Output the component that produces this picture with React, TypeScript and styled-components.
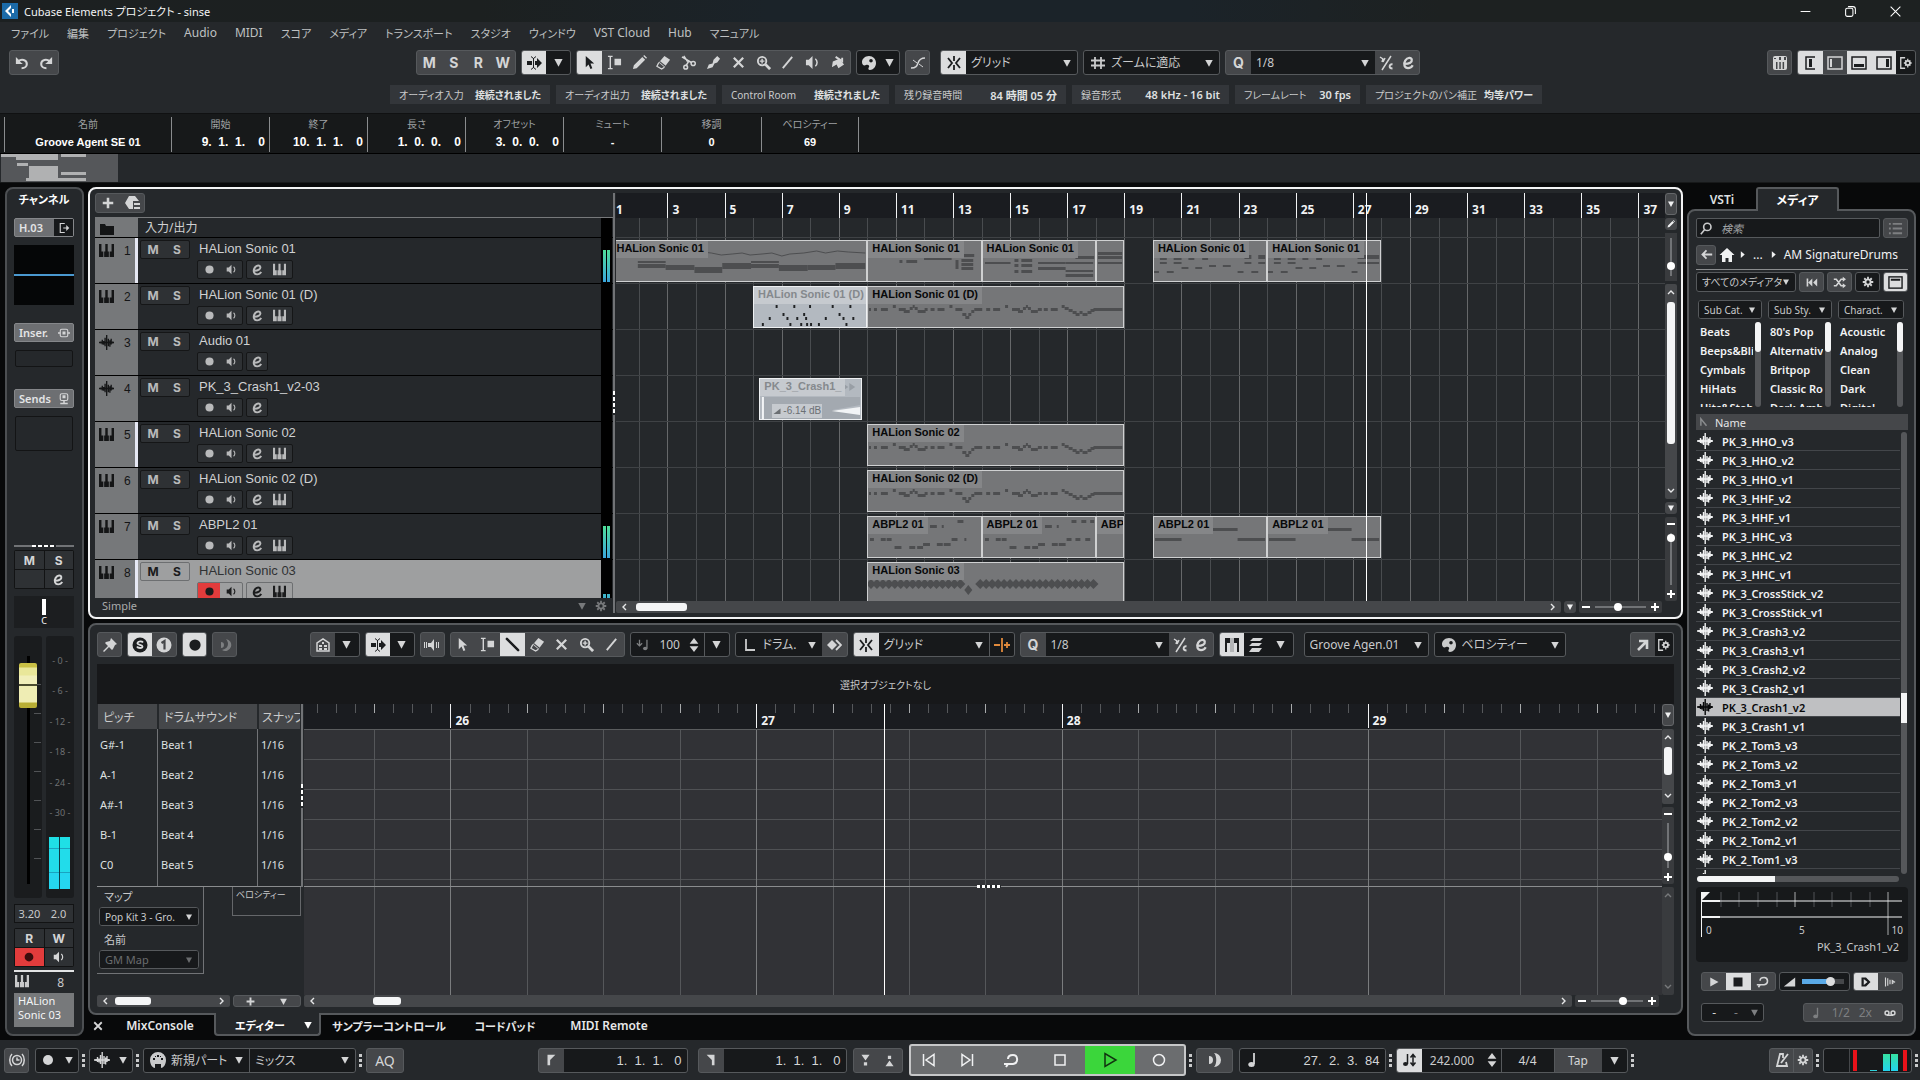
import React from "react";
import styled, { createGlobalStyle, css } from "styled-components";

/* ---------- theme values ---------- */
const c = {
  panel: "#25282b",
  dark: "#17191b",
  line: "#56595c",
  raised: "#45474a",
  key: "#2e3134",
  text: "#c9cacb",
  bright: "#f2f3f4",
  on: "#dcddde",
};

const Global = createGlobalStyle`
  * { box-sizing: border-box; }
  body { margin: 0; background: #08090a; overflow: hidden; }
  body, button, input, select, table {
    font-family: "Noto Sans", "Noto Sans CJK JP", sans-serif;
    font-size: 12px;
    font-feature-settings: "palt";
    color: ${c.text};
  }
  button { padding: 0; border: 0; background: none; }
  svg { display: block; flex: none; }
  ul { margin: 0; padding: 0; list-style: none; }
`;

/* ---------- icons ---------- */
const s = { fill: "none", stroke: "currentColor", strokeWidth: 2 } as const;
const t = { fill: "none", stroke: "currentColor", strokeWidth: 1 } as const;

const icons: Record<string, React.ReactNode> = {
  undo: <><path {...s} strokeWidth={2.4} d="M4 6C7 3 13.500 4 13.500 9c0 3-2.500 5-6 5" /><path fill="currentColor" d="M1 1v8h8L6.500 7 4 4z" /></>,
  redo: <><path {...s} strokeWidth={2.4} d="M12 6C9 3 2.500 4 2.500 9c0 3 2.500 5 6 5" /><path fill="currentColor" d="M15 1v8H7l2.500-2L12 4z" /></>,
  follow: <><path fill="currentColor" d="M1 6h5v4H1zM9 6h2V3l5 5-5 5v-3H9z" /><path {...t} d="M7.500 3v10M5 1.500l2.500 2 2.500-2M5 14.500l2.500-2 2.500 2" /></>,
  arrow: <path fill="currentColor" d="M4 1v12l3-3 2 5 2-1-2-5h4z" />,
  range: <><path {...s} strokeWidth={1.5} d="M1 1.500h5M1 14.500h5M3.500 2v12" /><path fill="currentColor" d="M8 4h7v7H8z" /></>,
  pencil: <path fill="currentColor" d="M1 15l1-4 9-9 3 3-9 9zM12 1l1-1 3 3-1 1z" />,
  eraser: <><path fill="currentColor" d="M3 8l6-7 6 4-6 8z" /><path fill="none" stroke="currentColor" strokeWidth="1.400" d="M3 8l-2 4 5 3 3-2" /><path stroke="#45474a" strokeWidth="1.200" d="M4 7l6 5" /></>,
  scissors: <><path {...s} strokeWidth={1.6} d="M1 2l10 6M5 12L8 7M3 1l4 6" /><circle {...t} strokeWidth={1.6} cx="13" cy="9" r="2.200" /><circle {...t} strokeWidth={1.6} cx="5" cy="13" r="2" /></>,
  glue: <path fill="currentColor" d="M1 15l2-5 4-1 1-4 4-4 3 3-3 4-3 1-2 4zM4 10h3v3H4z" />,
  cross: <path {...s} strokeWidth={2.4} d="M3 3l10 10M13 3L3 13" />,
  zoom: <><circle {...s} cx="6.500" cy="6.500" r="4.500" /><path {...s} strokeWidth={1.5} d="M6.500 4v5M4 6.500h5" /><path {...s} strokeWidth={3} d="M10 10l5 5" /></>,
  line: <path {...s} d="M3 14L13 2" />,
  speaker: <><path fill="currentColor" d="M1 5h3l4-4v14l-4-4H1z" /><path {...s} strokeWidth={1.6} d="M11 4c2.500 2 2.500 6 0 8" /></>,
  bucket: <><path fill="currentColor" d="M3 7l7-3 5 6-6 4-2-4-5 3z" /><path {...s} d="M6 2l6 4M13 3v5" /></>,
  palette: <path fill="currentColor" fillRule="evenodd" d="M8 1c4 0 7 3 7 7s-3 7-6 7c-2 0-2-2-1-3s-1-3-3-2-4 0-4-3c0-3 3-6 7-6zM10 4a1.800 1.800 0 100 3.600A1.800 1.800 0 0010 4z" />,
  fade: <><path {...s} strokeWidth={1.5} d="M1 13c5 0 6-2 7-5s3-5 7-5" /><path {...t} d="M3 5l4 3M9 9l4 3" /></>,
  snap: <path {...s} strokeWidth={1.8} d="M8 1v5M8 10v5M2 3l4 5-4 5M14 3l-4 5 4 5" />,
  hash: <path {...s} strokeWidth={1.8} d="M5 2v12M11 2v12M1 5.500h14M1 10.500h14" />,
  swing: <><path {...t} strokeWidth={1.5} d="M4 15L13 1M2 2l3 2-1 3M5 7l2-4" /><path {...t} strokeWidth={2} d="M14.500 9.500c-3-1-4.500 4 0 4" /></>,
  e: <path {...s} strokeWidth={2.4} d="M4 9.500c5 0 8-2 7.500-4.500S7 2 4.500 6s-.5 8 3 8c2.500 0 4-1 5-3" />,
  keyWin: <><rect x="1" y="1" width="14" height="14" rx="2" fill="currentColor" /><path fill="#45474a" d="M2 3h2v1H2zM7 2h2v3H7zM12 2h2v3h-2zM4 7h1.500v7H4zM7.300 7h1.500v7H7.300zM10.600 7h1.500v7h-1.500z" /></>,
  layL: <><path {...t} strokeWidth={1.5} d="M13 2H4v12h9" /><path fill="currentColor" d="M7 4h3v8H7z" /></>,
  layBoxL: <><rect {...t} strokeWidth={1.5} x="1" y="2" width="14" height="12" /><path fill="currentColor" d="M3 4h2v8H3z" /></>,
  layB: <><rect {...t} strokeWidth={1.5} x="1" y="2" width="14" height="12" /><path fill="currentColor" d="M3 9h10v3H3z" /></>,
  layR: <><rect {...t} strokeWidth={1.5} x="1" y="2" width="14" height="12" /><path fill="currentColor" d="M10 4h3v8h-3z" /></>,
  layT: <><rect {...t} strokeWidth={1.5} x="1" y="2" width="14" height="12" /><path fill="currentColor" d="M3 4h10v2H3z" /></>,
  setup: <><path {...t} strokeWidth={1.5} d="M7 2H2v12h5" /><circle {...s} cx="10" cy="8" r="2.500" /><path {...t} strokeWidth={1.5} d="M10 3v2M10 11v2M5.500 8h2M12.500 8h2M7 5l1 1M12 10l1 1M13 5l-1 1M8 10l-1 1" /></>,
  gear: <><circle {...s} strokeWidth={2.6} cx="8" cy="8" r="3.500" /><path {...s} strokeWidth={2.4} d="M8 1v3M8 12v3M1 8h3M12 8h3M3 3l2 2M11 11l2 2M13 3l-2 2M5 11l-2 2" /></>,
  down: <path fill="currentColor" d="M2 3h12L8 14z" />,
  plus: <path {...s} strokeWidth={3.4} d="M8 1v14M1 8h14" />,
  preset: <><path fill="currentColor" d="M5 1h6l4 5H9v8H5L1 8z" /><path {...s} strokeWidth={2.2} d="M10 9h6M10 13h6" /></>,
  folder: <path fill="currentColor" d="M1 3h5l1 2h8v9H1z" />,
  keys: <path fill="currentColor" d="M0 1h2.600v8h2v6H0zM6.700 1h2.600v8h1.200v6h-5V9h1.200zM13.400 1H16v14h-4.600V9h2z" />,
  wave: <path fill="none" stroke="currentColor" strokeWidth="1.400" d="M0 8h16M2 7v2M3.500 5v5M5 6.500v4M6.500 3v9M8.200 0v16M10 4v8M11.600 5.500v7M13 4v6M14.500 7v2" />,
  rec: <circle cx="8" cy="8" r="5" fill="currentColor" />,
  out: <><path {...s} strokeWidth={1.5} d="M9 2H3v12h6M7 8h5" /><path fill="currentColor" d="M11 4l4 4-4 4z" /></>,
  insert: <><rect {...s} strokeWidth={1.5} x="3" y="3" width="10" height="10" rx="2" /><path fill="currentColor" d="M6 6h4v4H6zM0 7h3v2H0zM13 7h3v2h-3z" /></>,
  send: <><rect {...s} strokeWidth={1.5} x="3" y="1" width="10" height="9" rx="2" /><path fill="currentColor" d="M6 3h4v4H6zM7 10h2v3H7zM3 13h10v2H3z" /></>,
  pin: <path fill="currentColor" d="M9 1l6 6-2 1-2 4-1 1-3-3-5 5-1-1 5-5-3-3 1-1 4-1z" />,
  solo: <><circle cx="8" cy="8" r="7.500" fill="currentColor" /><path fill="none" stroke="#dcddde" strokeWidth="1.800" d="M11 5.500c-1-1.500-5-1.500-5.500.5s5 1.500 5 3.500-4.500 2-5.500 0" /></>,
  one: <><circle cx="8" cy="8" r="7.500" fill="currentColor" /><path fill="none" stroke="#45474a" strokeWidth="2.200" d="M5.500 6L8.500 4v8.500" /></>,
  loopRec: <path fill="currentColor" fillRule="evenodd" d="M9 2a6 6 0 11-4 11c4-1 6-3 6-6 0-2-1-4-2-5zM4 5a2.500 2.500 0 110 6z" />,
  home: <><path {...s} strokeWidth={1.5} d="M2 14V6l6-4 6 4v8z" /><path fill="currentColor" d="M7 5h2v2H7zM4 8h3v2H4zM9 8h3v2H9zM4 11h3v2H4zM9 11h3v2H9z" /></>,
  feedback: <><path fill="currentColor" d="M4 6h3l3-4v12l-3-4H4z" /><path {...t} d="M.5 5v6M2.500 5v6M12.500 5v6M14.500 5v6" /></>,
  stick: <path {...s} strokeWidth={2.6} d="M2 2l4 4 8 8" strokeLinecap="round" />,
  velIn: <><path {...s} strokeWidth={1.5} d="M4 2v6M1 6l3 3 3-3" /><path {...s} strokeWidth={1.5} d="M12.500 2v10" /><ellipse cx="10.500" cy="12" rx="2.500" ry="2" fill="currentColor" /></>,
  spin: <path fill="currentColor" d="M8 0l5 6.500H3zM8 16l5-6.500H3z" />,
  len: <path {...s} strokeWidth={1.8} d="M4 2v11h9" />,
  diamond: <><path fill="currentColor" d="M6 3l5 5-5 5-5-5z" /><path {...s} strokeWidth={1.8} d="M10 3l5 5-5 5" /></>,
  nudge: <path {...s} strokeWidth={1.8} d="M0 8h6M8 1v14M10 8h6M13 5v6" />,
  pads: <><path fill="currentColor" d="M1 1h5v5H3v9H1zM15 1h-5v5h3v9h2z" /><path {...t} strokeWidth={1.2} d="M7 1v14M9 1v14" opacity=".35" /></>,
  layers: <path fill="currentColor" d="M5 1h10l-3 3H2zM4 6h10l-3 3H1zM4 11h10l-3 4H1z" />,
  popout: <path {...s} strokeWidth={2.6} d="M4 4h8v8M12 4L3 13" />,
  search: <><circle {...s} cx="9" cy="6" r="4.500" /><path {...s} d="M6 9l-5 6" /></>,
  list: <path {...s} d="M1 3h2M5 3h10M1 8h2M5 8h10M1 13h2M5 13h10" />,
  back: <path {...s} strokeWidth={2.2} d="M15 8H3M8 3L3 8l5 5" />,
  house: <path fill="currentColor" d="M8 1l7.500 7H13v7H9.500v-4h-3v4H3V8H.5z" />,
  right: <path fill="currentColor" d="M5 2l7 6-7 6z" />,
  rewind: <path fill="currentColor" d="M2 3h2v10H2zM9 3v10L4 8zM15 3v10l-5-5z" />,
  shuffle: <><path {...s} d="M1 4h3l6 8h3M1 12h3l6-8h3" /><path fill="currentColor" d="M12 1l4 3-4 3zM12 9l4 3-4 3z" /></>,
  play: <path fill="currentColor" d="M3 2l11 6-11 6z" />,
  stop: <path fill="currentColor" d="M2 2h12v12H2z" />,
  cycle: <path {...s} d="M1 12h4l-2 3M5 12h5c6-1 5-9 0-9-3 0-5 1-5 4" />,
  vol: <path fill="currentColor" d="M1 14L15 3v11z" />,
  auto: <path fill="currentColor" fillRule="evenodd" d="M2 2h6l6 6-6 6H2zM5 4v8l5-4z" />,
  beats: <path {...s} strokeWidth={1.5} d="M2 2v12M5 3v10M8 5v6M11 6l3 2-3 2z" />,
  note: <><path {...s} strokeWidth={1.8} d="M10 1v11" /><ellipse cx="7.500" cy="12.500" rx="3.200" ry="2.500" fill="currentColor" /></>,
  tape: <><circle {...s} cx="4" cy="8" r="2.600" /><circle {...s} cx="12" cy="8" r="2.600" /><path {...s} d="M4 11h8" /></>,
  clock: <><circle {...s} strokeWidth={1.5} cx="8" cy="8" r="4.500" /><path {...t} strokeWidth={1.5} d="M8 5.500V8h2.500M3 2C0 5 0 11 3 14M13 2c3 3 3 9 0 12" /></>,
  palPart: <><path fill="currentColor" d="M8 0a8 8 0 018 8c0 5-3 8-5 8v-4H5v4C3 16 0 13 0 8a8 8 0 018-8z" /><path fill="#17191b" d="M3 6h2v2H3zM7 3h2v2H7zM11 6h2v2h-2zM5 4h1v1H5zM10 4h1v1h-1z" /></>,
  locL: <path fill="currentColor" d="M4 2h9L7 8v6H4z" />,
  locR: <path fill="currentColor" d="M3 2h9v12H9V8z" />,
  punchIn: <path fill="currentColor" d="M3 1h10L8 8zM6 10h4v4H6z" />,
  punchOut: <path fill="currentColor" d="M3 15h10L8 8zM6 2h4v4H6z" />,
  toStart: <path {...s} strokeWidth={1.5} d="M2.500 2v12M13 2.500v11L5 8z" />,
  toEnd: <path {...s} strokeWidth={1.5} d="M13.500 2v12M3 2.500v11L11 8z" />,
  stopO: <rect {...s} strokeWidth={1.5} x="3" y="3" width="10" height="10" />,
  playO: <path {...s} strokeWidth={1.5} d="M3 1.500v13L14 8z" />,
  recO: <circle {...s} strokeWidth={1.5} cx="8" cy="8" r="5.500" />,
  preroll: <path fill="currentColor" d="M8 1a7 7 0 010 14c3-3 3-11 0-14zM3 4a4 4 0 110 8z" />,
  tempo: <><path {...s} strokeWidth={1.5} d="M6.500 2v10M12 3v10M9.500 5.500L12 2.500l2.500 3M9.500 10.500l2.500 3 2.500-3" /><ellipse cx="4.500" cy="12" rx="2.500" ry="2" fill="currentColor" /></>,
  metro: <path {...s} strokeWidth={1.8} d="M9 6V2H6L3 14h10l-1-4M7 11l7-9" />,
  sort: <path {...s} strokeWidth={2.4} stroke="#8a8c8e" d="M3 14V3l9 11" />,
  min: <path {...t} strokeWidth={1.2} d="M2 8h12" />,
  restore: <><rect {...t} strokeWidth={1.3} x="2" y="4" width="9" height="10" rx="2" /><path {...t} strokeWidth={1.3} d="M5 2h6c2 0 3 1 3 3v6" /></>,
  close: <path {...t} strokeWidth={1.3} d="M2 2l12 12M14 2L2 14" />,
};

const Icon = ({ n, z = 16 }: { n: string; z?: number }) => (
  <svg width={z} height={z} viewBox="0 0 16 16" aria-hidden="true">{icons[n]}</svg>
);

/* ---------- shared controls ---------- */
const Group = styled.div<{ $w?: number; $dark?: boolean; $h?: number }>`
  display: flex;
  flex: none;
  width: ${(p) => (p.$w ? p.$w + "px" : "auto")};
  height: ${(p) => p.$h ?? 25}px;
  border: 1px solid ${c.line};
  border-radius: 3px;
  overflow: hidden;
  background: ${(p) => (p.$dark ? c.dark : c.raised)};
`;

type BtnProps = { $on?: boolean; $dark?: boolean; $w?: number; $dim?: boolean; $fg?: string; $bg?: string };
const Btn = styled.button<BtnProps>`
  display: flex;
  flex: 0 1 auto;
  width: ${(p) => p.$w ?? 25}px;
  min-width: 0;
  align-items: center;
  justify-content: center;
  color: ${(p) => p.$fg ?? (p.$on ? "#1b1d1f" : p.$dim ? "#7d7f81" : "#d4d5d6")};
  background: ${(p) => p.$bg ?? (p.$on ? c.on : p.$dark ? c.dark : "transparent")};
`;

const Letter = styled(Btn)<{ $small?: boolean }>`
  font: bold ${(p) => (p.$small ? 12 : 14)}px Inter, "Liberation Sans", sans-serif;
`;
const TextBtn = styled(Btn)`
  font-size: 14px;
`;
const Lit = styled(Btn)`
  border-left: 1px solid ${c.line};
`;

const SelectWrap = styled.span`
  position: relative;
  display: flex;
  flex: 1 1 0;
  min-width: 0;
  align-items: center;
  background: ${c.dark};
  > svg { margin-left: 6px; }
  & + & { border-left: 1px solid ${c.line}; }
`;
const NativeSelect = styled.select<{ $size: number }>`
  appearance: none;
  flex: 1 1 0;
  min-width: 0;
  height: 100%;
  padding: 0 13px 0 5px;
  border: 0;
  background: transparent;
  font-size: ${(p) => p.$size}px;
  &:disabled { color: #6a6c6e; opacity: 1; }
`;
const CaretMark = styled.span<{ $dim?: boolean }>`
  position: absolute;
  right: 5px;
  top: 50%;
  translate: 0 -50%;
  pointer-events: none;
  color: ${(p) => (p.$dim ? "#6a6c6e" : "#d4d5d6")};
`;

const Select = ({ label, value, icon, size = 12, disabled }: { label: string; value: string; icon?: string; size?: number; disabled?: boolean }) => (
  <SelectWrap>
    {icon && <Icon n={icon} />}
    <NativeSelect aria-label={label} defaultValue={value} $size={size} disabled={disabled}>
      <option>{value}</option>
    </NativeSelect>
    <CaretMark $dim={disabled}><Icon n="down" z={size < 12 ? 8 : 10} /></CaretMark>
  </SelectWrap>
);

const IconBtn = ({ n, z, ...p }: { n: string; z?: number } & BtnProps) => (
  <Btn type="button" aria-label={n} {...p}><Icon n={n} z={z} /></Btn>
);

const Bar = styled.div<{ $gap?: number; $ml?: number; $mt?: number }>`
  display: flex;
  align-items: center;
  gap: ${(p) => p.$gap ?? 5}px;
  margin-left: ${(p) => p.$ml ?? 0}px;
  margin-top: ${(p) => p.$mt ?? 0}px;
`;

const Dots = styled.i`
  width: 3px;
  height: 13px;
  margin: 0 -2px 0 -3px;
  background: repeating-linear-gradient(#c9cacb 0 3px, transparent 3px 5px);
`;

/* scroll bars */
const ScrollBox = styled.div<{ $v?: boolean; $len?: number; $dim?: boolean }>`
  display: flex;
  flex-direction: ${(p) => (p.$v ? "column" : "row")};
  flex: ${(p) => (p.$len ? `0 0 ${p.$len}px` : "1 1 0")};
  align-items: center;
  min-width: 0;
  min-height: 0;
  background: ${(p) => (p.$dim ? "#393b3e" : c.raised)};
  border-radius: 2px;
  button { color: ${(p) => (p.$dim ? "#77797b" : "#e6e7e8")}; }
`;
const ScrollTrack = styled.div<{ $v?: boolean }>`
  display: flex;
  flex: 1 1 0;
  flex-direction: ${(p) => (p.$v ? "column" : "row")};
`;
const Thumb = styled.i<{ $v?: boolean; $at: number; $len: number }>`
  border-radius: 3px;
  background: #f4f5f6;
  ${(p) => p.$v
    ? css`width: 8px; height: ${p.$len}px; margin-top: ${p.$at}px;`
    : css`height: 8px; width: ${p.$len}px; margin-left: ${p.$at}px;`}
`;
const ArrowBtn = styled.button<{ $turn: number }>`
  width: 12px;
  height: 12px;
  margin: ${(p) => (p.$turn % 180 ? "0 2px" : "2px 0")};
  display: grid;
  place-items: center;
  rotate: ${(p) => p.$turn}deg;
`;
const Chevron = () => (
  <svg width="8" height="8" viewBox="0 0 8 8"><path d="M1 6l3-3 3 3" fill="none" stroke="currentColor" strokeWidth="1.400" /></svg>
);
const Scroll = ({ v, len, at, size }: { v?: boolean; len?: number; at: number; size: number }) => (
  <ScrollBox $v={v} $len={len} $dim={size === 0}>
    <ArrowBtn type="button" aria-label="scroll back" $turn={v ? 0 : -90}><Chevron /></ArrowBtn>
    <ScrollTrack $v={v}>{size > 0 && <Thumb $v={v} $at={at} $len={size} />}</ScrollTrack>
    <ArrowBtn type="button" aria-label="scroll forward" $turn={v ? 180 : 90}><Chevron /></ArrowBtn>
  </ScrollBox>
);

const Range = styled.input<{ $v?: boolean }>`
  appearance: none;
  flex: 1 1 0;
  min-width: 0;
  min-height: 0;
  margin: 0;
  ${(p) => p.$v
    ? css`writing-mode: vertical-lr; width: 12px; background: linear-gradient(#717376, #717376) center / 2px 100% no-repeat;`
    : css`height: 12px; background: linear-gradient(#717376, #717376) center / 100% 2px no-repeat;`}
  &::-webkit-slider-thumb {
    appearance: none;
    width: 8px;
    height: 8px;
    border-radius: 50%;
    background: #fff;
  }
`;
const ZoomBox = styled.div<{ $v?: boolean; $len: number }>`
  display: flex;
  flex: 0 0 ${(p) => p.$len}px;
  flex-direction: ${(p) => (p.$v ? "column" : "row")};
  align-items: center;
  min-width: 0;
  min-height: 0;
  gap: 4px;
  padding: ${(p) => (p.$v ? "2px 0" : "0 2px")};
  background: #393b3e;
  border-radius: 2px;
  button { color: #fff; }
`;
const Sign = ({ plus }: { plus?: boolean }) => (
  <button type="button" aria-label={plus ? "zoom in" : "zoom out"}>
    <svg width="10" height="10" viewBox="0 0 10 10"><path d={plus ? "M5 1v8M1 5h8" : "M1 5h8"} stroke="currentColor" strokeWidth="2" /></svg>
  </button>
);
const Zoom = ({ v, len, value }: { v?: boolean; len: number; value: number }) => (
  <ZoomBox $v={v} $len={len}>
    <Sign />
    <Range type="range" aria-label="zoom" $v={v} defaultValue={value} />
    <Sign plus />
  </ZoomBox>
);
const TinyBtn = styled.button<{ $h?: number; $edge?: boolean }>`
  display: grid;
  place-items: center;
  flex: none;
  width: 12px;
  height: ${(p) => p.$h ?? 12}px;
  border: ${(p) => (p.$edge ? "1px solid #65676a" : "0")};
  border-radius: 3px;
  background: ${c.raised};
  color: #f0f1f2;
`;

/* ---------- frame ---------- */
const Shell = styled.div`
  display: flex;
  flex-direction: column;
  height: 100vh;
  background: #08090a;
`;
const Top = styled.header`
  flex: none;
  background: ${c.panel};
`;
const TitleBar = styled.div`
  display: flex;
  align-items: center;
  gap: 6px;
  height: 22px;
  padding: 0 18px 0 2px;
  background: linear-gradient(90deg, #1c2021, #1c2020 25%, #1b2329 40%, #1b2329 62%, #1d2121 75%);
  font-size: 11px;
  color: ${c.bright};
`;
const WinBtns = styled.div`
  display: flex;
  gap: 32px;
  margin-left: auto;
  button { color: #fff; }
`;
const Menu = styled.nav`
  display: flex;
  gap: 18px;
  height: 21px;
  padding: 0 11px;
  align-items: center;
`;
const MenuItem = styled.a<{ $jp: boolean }>`
  color: #bfc0c1;
  text-decoration: none;
  white-space: nowrap;
  font-size: ${(p) => (p.$jp ? 11 : 12)}px;
`;
const ToolRow = styled.div`
  display: flex;
  justify-content: space-between;
  height: 38px;
  padding: 1px 4px 0 9px;
  align-items: center;
`;
const Status = styled.div`
  display: flex;
  justify-content: center;
  gap: 6px;
  height: 32px;
  padding: 4px 0 9px 12px;
`;
const Chip = styled.div<{ $w: number; $jp: boolean }>`
  display: flex;
  justify-content: space-between;
  align-items: center;
  min-width: ${(p) => p.$w}px;
  padding: 0 9px;
  background: #33363a;
  font-size: 10px;
  white-space: nowrap;
  b { font-weight: 600; font-size: ${(p) => (p.$jp ? 10 : 11)}px; color: #dfe0e1; }
`;
const InfoLine = styled.dl`
  display: flex;
  height: 41px;
  margin: 0;
  padding: 3px 0 1px 4px;
  background: #17191a;
  border-bottom: 1px solid #000;
  border-top: 1px solid #101112;
`;
const Field = styled.div<{ $w: number; $right?: boolean }>`
  width: ${(p) => p.$w}px;
  border-left: 1px solid #8a8c8e;
  text-align: center;
  &:last-child { border-right: 1px solid #8a8c8e; }
  dt { font-size: 10px; line-height: 14px; color: #9fa1a3; }
  dd {
    margin: 3px 0 0;
    padding-right: ${(p) => (p.$right ? 4 : 0)}px;
    text-align: ${(p) => (p.$right ? "right" : "center")};
    font: bold ${(p) => (p.$right ? 12 : 11)}px/17px "Liberation Sans", sans-serif;
    color: #fff;
    white-space: pre;
  }
`;
const Overview = styled.div`
  height: 29px;
  border-bottom: 1px solid #17191a;
  background: ${c.panel};
`;

const Main = styled.main`
  display: flex;
  flex: 1 1 0;
  min-height: 0;
  gap: 4px;
  padding: 4px 4px 4px 5px;
`;
const Center = styled.div`
  display: flex;
  flex-direction: column;
  flex: 1 1 0;
  min-width: 0;
`;

/* ---------- channel strip ---------- */
const Strip = styled.aside`
  display: flex;
  flex-direction: column;
  align-items: stretch;
  flex: 0 0 79px;
  padding: 3px 8px 7px 7px;
  border: 2px solid #4c4f52;
  border-radius: 8px;
  background: ${c.panel};
`;
const StripTitle = styled.h2`
  margin: 0 0 10px;
  font-size: 11px;
  line-height: 16px;
  font-weight: 600;
  text-align: center;
  color: #fff;
`;
const StripHead = styled.div<{ $mt?: number }>`
  display: flex;
  flex: none;
  height: 19px;
  margin-top: ${(p) => p.$mt ?? 0}px;
  border: 1px solid #85878a;
  border-radius: 2px;
  background: #6d6f72;
  font-size: 11px;
  font-weight: 600;
  color: #e4e5e6;
  span { flex: 1; line-height: 17px; padding-left: 4px; }
`;
const Eq = styled.div`
  flex: none;
  height: 60px;
  margin-top: 8px;
  background: linear-gradient(#4a98cf, #4a98cf) center / 100% 2px no-repeat #050607;
`;
const Slot = styled.div<{ $h: number }>`
  flex: none;
  height: ${(p) => p.$h}px;
  margin: 8px 1px 0;
  border: 1px solid #131415;
  border-radius: 2px;
`;
const Grip = styled.div`
  height: 2px;
  margin: auto 0 3px;
  background: repeating-linear-gradient(90deg, #fff 0 4px, ${c.panel} 4px 6px) center / 24px 2px no-repeat, #717376;
`;
const Quad = styled.div`
  display: grid;
  flex: none;
  grid-template-columns: 1fr 1fr;
  grid-auto-rows: 18px;
  gap: 1px;
  padding: 1px;
  background: #121314;
  border-radius: 2px;
  > button { width: auto; }
`;
const Pan = styled.div`
  flex: none;
  height: 32px;
  margin: 7px 0 8px;
  padding-top: 3px;
  background: #1c1e20;
  text-align: center;
  font-size: 9px;
  line-height: 11px;
  color: #fff;
  &::before { content: ""; display: block; width: 4px; height: 16px; margin: 0 auto; background: #fff; }
`;
const Levels = styled.div`
  display: flex;
  flex: none;
  height: 262px;
  gap: 4px;
`;
const Well = styled.div`
  position: relative;
  display: flex;
  flex: 1;
  min-width: 0;
  border-radius: 3px;
  background: #1a1c1e;
  padding: 20px 0 14px;
`;
const Fader = styled.input`
  appearance: none;
  writing-mode: vertical-lr;
  width: 28px;
  height: 100%;
  margin: 0;
  background: linear-gradient(#000, #000) center / 3px 100% no-repeat,
    repeating-linear-gradient(transparent 0 28px, #515356 28px 29px) 20px 0 / 7px 100% no-repeat;
  &::-webkit-slider-thumb {
    appearance: none;
    width: 18px;
    height: 45px;
    border-radius: 2px;
    background: linear-gradient(#c9c045 0 4px, #e9e79a 5px 12px, #f1efbb 13px 21px, #4b4c30 21px 23px, #efedb4 23px 39px, #b8ae35 40px);
  }
`;
const Scale = styled.ol`
  display: flex;
  flex-direction: column;
  width: 100%;
  height: 162px;
  margin: 0;
  padding: 0;
  justify-content: space-between;
  list-style: none;
  text-align: center;
  white-space: nowrap;
  font-size: 9px;
  line-height: 10px;
  color: #6f7173;
`;
const Meters = styled.div`
  position: absolute;
  inset: auto 4px 9px 3px;
  display: flex;
  gap: 1px;
  height: 52px;
  background: #0d3a44;
  i { flex: 1; background: repeating-linear-gradient(0deg, #25d6f0 0 16px, #1aa3c0 16px 17px, #22dcea 17px 40px, #1aa3c0 40px 41px, #1fdfe6 41px 52px); }
`;
const Readout = styled.div`
  display: grid;
  flex: none;
  grid-template-columns: 1fr 1fr;
  height: 19px;
  margin: 6px 0 5px;
  border: 1px solid #121314;
  background: ${c.key};
  font-size: 11px;
  line-height: 17px;
  text-align: center;
`;
const Num = styled.div`
  display: flex;
  justify-content: space-between;
  flex: none;
  height: 21px;
  margin-top: 3px;
  padding: 2px 10px 0 1px;
  border-top: 2px solid #e2e3e4;
  line-height: 17px;
`;
const NameBox = styled.div`
  flex: none;
  height: 34px;
  margin-top: 2px;
  padding: 1px 4px;
  background: #77797b;
  color: #f4f5f6;
  font-size: 11px;
  line-height: 14px;
`;

/* ---------- project zone ---------- */
const Project = styled.section`
  display: flex;
  flex: none;
  height: 40vh;
  margin-bottom: 4px;
  padding: 4px 4px 4px 5px;
  border: 2px solid #f2f3f4;
  border-radius: 8px;
  background: ${c.panel};
  overflow: hidden;
`;
const Tracks = styled.div`
  display: flex;
  flex: 0 0 518px;
  flex-direction: column;
`;
const TrackHead = styled.div`
  flex: none;
  height: 25px;
  border-bottom: 1px solid #77797b;
`;
const TrackList = styled.ul`
  flex: 1 1 0;
  min-height: 0;
  overflow: hidden;
`;
const Row = styled.li<{ $h?: number; $sel?: boolean }>`
  display: flex;
  height: ${(p) => p.$h ?? 46}px;
  border-bottom: 1px solid #000;
  background: ${(p) => (p.$sel ? "#9e9fa0" : "#25282b")};
  color: ${(p) => (p.$sel ? "#303234" : "#d0d1d2")};
`;
const RowTag = styled.div<{ $bar?: boolean; $pt?: number }>`
  display: flex;
  flex: 0 0 43px;
  gap: 10px;
  padding: ${(p) => p.$pt ?? 5}px 0 0 4px;
  border-right: 3px solid ${(p) => (p.$bar ? "#e6e8f4" : "transparent")};
  background: linear-gradient(90deg, #76787a 40px, transparent 40px);
  color: #141516;
  font: 12px/16px "Liberation Sans", sans-serif;
`;
const RowBody = styled.div`
  flex: 1;
  display: grid;
  grid-template-columns: 57px 1fr;
  grid-template-rows: 22px 19px;
  padding-left: 2px;
`;
const MiniGroup = styled.div<{ $sel?: boolean; $mt?: number }>`
  display: flex;
  width: max-content;
  height: 19px;
  margin-top: ${(p) => p.$mt ?? 0}px;
  border: 1px solid ${(p) => (p.$sel ? "#6d6f71" : "#151617")};
  border-radius: 2px;
  background: ${(p) => (p.$sel ? "transparent" : c.key)};
  button { color: ${(p) => (p.$sel ? "#1b1c1d" : "#b9babb")}; }
`;
const RowName = styled.span`
  padding-left: 2px;
  font: 13px/22px "Liberation Sans", sans-serif;
`;
const FolderName = styled.span`
  flex: 1;
  padding-left: 7px;
  line-height: 19px;
`;
const RowMeter = styled.div<{ $lvl?: number }>`
  display: flex;
  align-items: flex-end;
  flex: 0 0 12px;
  gap: 1px;
  padding: 0 2px 1px;
  border-right: 1px solid ${c.panel};
  background: #000;
  i { flex: 1; height: ${(p) => p.$lvl ?? 0}px; background: linear-gradient(#4fdf9a, #3aa6dc) bottom / 100% 32px; }
`;
const TrackFoot = styled.div`
  display: flex;
  align-items: center;
  flex: none;
  gap: 8px;
  height: 15px;
  padding: 0 6px 0 7px;
  font-size: 11px;
  color: #a9abac;
  svg:first-of-type { margin-left: auto; }
  svg { color: #77797b; }
`;
const Split = styled.div<{ $h?: number }>`
  position: relative;
  flex: 0 0 2px;
  height: ${(p) => (p.$h ? p.$h + "px" : "auto")};
  margin-right: 1px;
  background: #717376;
  &::after {
    content: "";
    position: absolute;
    inset: calc(50% - 12px) 0;
    background: repeating-linear-gradient(#fff 0 4px, #25282b 4px 6px);
  }
`;
const Time = styled.div`
  display: flex;
  flex: 1 1 0;
  min-width: 0;
  flex-direction: column;
`;
const TimeTop = styled.div`
  display: flex;
  flex: 1 1 0;
  min-height: 0;
`;
const Stage = styled.div`
  position: relative;
  display: flex;
  flex: 1 1 0;
  min-width: 0;
  flex-direction: column;
  overflow: hidden;
`;
const Ruler = styled.div`
  position: relative;
  flex: 0 0 25px;
  background: #1a1c20;
`;
const Tick = styled.span<{ $h?: number; $c?: string }>`
  position: absolute;
  top: 0;
  height: ${(p) => p.$h ?? 25}px;
  padding: 8px 0 0 4px;
  border-left: 1px solid ${(p) => p.$c ?? "#f2f3f4"};
  font: bold 12px/17px "Noto Sans", sans-serif;
  color: #f2f3f4;
`;
const FirstBar = styled.span`
  display: block;
  padding-top: 8px;
  font: bold 12px/17px "Noto Sans", sans-serif;
  color: #f2f3f4;
`;
const Canvas = styled.div<{ $bg?: string }>`
  position: relative;
  flex: 1 1 0;
  min-height: 0;
  overflow: hidden;
  background: ${(p) => p.$bg ?? "#25282b"};
`;
const VLine = styled.i<{ $c: string }>`
  position: absolute;
  top: 0;
  bottom: 0;
  width: 1px;
  background: ${(p) => p.$c};
`;
const Playhead = styled.i`
  position: absolute;
  top: 0;
  bottom: 0;
  width: 1px;
  background: #fff;
`;
const Lane = styled.div<{ $h?: number }>`
  position: relative;
  height: ${(p) => p.$h ?? 46}px;
  border-bottom: 1px solid #3f4245;
`;
const Event = styled.div<{ $sel?: boolean }>`
  position: absolute;
  top: 2px;
  height: 42px;
  border: 1px solid ${(p) => (p.$sel ? "#eef0f2" : "#cfd0d1")};
  background: ${(p) => (p.$sel ? "#b3b9c0" : "#757678")};
  overflow: hidden;
  color: ${(p) => (p.$sel ? "#202224" : "#4d4e50")};
  > svg { position: absolute; inset: 0; }
`;
const EvLabel = styled.span<{ $sel?: boolean }>`
  position: relative;
  display: block;
  width: max-content;
  padding: 0 4px 2px;
  font: bold 11px/15px "Liberation Sans", sans-serif;
  white-space: nowrap;
  background: ${(p) => (p.$sel ? "#c6cacf" : "#858688")};
  color: ${(p) => (p.$sel ? "#85898d" : "#08090a")};
`;
const GainTag = styled.span`
  position: absolute;
  left: 12px;
  top: 25px;
  display: flex;
  align-items: center;
  gap: 2px;
  padding: 0 1px;
  background: #c6cacf;
  color: #6b6f73;
  font: 10px/14px "Liberation Sans", sans-serif;
`;
const SideCol = styled.div`
  display: flex;
  flex: 0 0 12px;
  min-width: 0;
  flex-direction: column;
  gap: 3px;
`;
const ScrollRow = styled.div`
  display: flex;
  flex: 0 0 12px;
  gap: 3px;
`;
const SmallSlider = styled.div`
  display: flex;
  flex: 0 0 48px;
  min-height: 0;
  flex-direction: column;
  padding: 5px 0;
  background: #393b3e;
`;

type Note = [number, number, number, number?];
const Notes = ({ w, notes, children }: { w: number; notes: Note[]; children?: React.ReactNode }) => (
  <svg width="100%" height="40" viewBox={`0 0 ${w} 40`} preserveAspectRatio="none" fill="currentColor">
    {notes.map(([x, y, nw, nh = 3], i) => <rect key={i} x={x} y={y - 1} width={nw} height={nh} />)}
    {children}
  </svg>
);

const nA: Note[] = [[26, 21, 28, 2], [26, 24, 28, 4], [54, 25, 29, 5], [83, 27, 28, 6], [111, 23, 29, 6], [140, 21, 28, 2], [140, 24, 28, 4], [168, 25, 29, 6], [197, 25, 28, 5], [225, 23, 30, 6]];
const nB: Note[] = [[32, 20, 3], [39, 20, 11], [57, 18, 28, 2], [89, 20, 3, 9], [95, 14, 13], [95, 19, 12], [95, 23, 12], [95, 27, 12]];
const nC: Note[] = [[2, 22, 26, 2], [32, 19, 4], [32, 24, 4], [32, 30, 4], [39, 19, 11], [39, 24, 11], [39, 30, 11], [56, 22, 28, 2], [56, 27, 28], [94, 16, 19], [84, 22, 28, 2], [84, 30, 28, 2], [84, 34, 28]];
const nD: Note[] = [[1, 12, 26], [1, 16, 26], [1, 22, 26, 2]];
const nDrum: Note[] = [[22, 19, 2], [40, 19, 2], [56, 19, 2], [79, 19, 2], [97, 19, 2], [29, 27, 2], [50, 27, 2], [86, 27, 2], [15, 31, 2], [33, 31, 2], [43, 31, 2], [52, 31, 2], [72, 31, 2], [90, 31, 2], [100, 31, 2], [8, 37, 2], [36, 37, 2], [47, 37, 2], [53, 37, 2], [57, 37, 2], [65, 37, 2], [93, 37, 2]];
const nMel: Note[] = [[1, 22, 2], [6, 22, 3], [13, 22, 7], [25, 19, 3], [31, 22, 7], [36, 24, 6], [42, 21, 3], [45, 19, 2], [47, 21, 3], [50, 24, 8], [57, 22, 3], [63, 22, 4], [70, 22, 7], [82, 19, 3], [88, 22, 7], [95, 27, 4], [98, 30, 4], [101, 27, 3], [104, 24, 3], [107, 22, 8], [119, 22, 4], [126, 22, 7], [138, 19, 3], [145, 22, 8], [151, 24, 5], [156, 21, 3], [159, 19, 2], [161, 21, 3], [164, 24, 7], [171, 22, 4], [177, 22, 4], [184, 22, 7], [195, 19, 3], [198, 21, 4], [202, 23, 4], [206, 25, 4], [209, 27, 4], [213, 25, 3], [216, 27, 5], [221, 25, 4], [224, 23, 4], [227, 22, 29]];
const nBass: Note[] = [[2, 22, 4], [13, 22, 5], [19, 22, 5], [63, 9, 7], [75, 9, 2], [27, 30, 7], [42, 30, 6], [50, 30, 6], [56, 27, 7], [70, 27, 6], [77, 27, 7]];
const nBass1: Note[] = [...nBass, [91, 4, 6], [85, 22, 6], [98, 22, 2]];
const nBass2: Note[] = [...nBass, [90, 4, 5], [100, 4, 5], [109, 4, 4], [85, 22, 5], [94, 22, 5], [104, 22, 5]];
const nE: Note[] = [[0, 31, 5, 2], [13, 31, 7, 2], [6, 22, 7, 2], [20, 22, 8, 2], [6, 18, 7, 2], [20, 18, 8, 2], [35, 18, 6, 2], [49, 18, 6, 2], [28, 27, 7, 2], [42, 27, 7, 2], [56, 25, 7, 2], [70, 25, 8, 2], [85, 31, 6, 2]];
const nE1: Note[] = [...nE, [99, 31, 7, 2], [92, 22, 7, 2], [92, 15, 7, 4], [106, 22, 7, 2], [106, 15, 7, 4]];
const nE2: Note[] = [...nE, [91, 22, 22, 2], [91, 15, 22, 4]];
const nF: Note[] = [[1, 22, 27], [59, 12, 26], [85, 22, 28]];

const BAR0 = 1.2;
const BARS = 36.73;
const barPct = (b: number) => ((b - BAR0) / BARS) * 100;
const span = (a: number, b: number) => ({ left: `${barPct(a)}%`, width: `${((b - a) / BARS) * 100}%` });

type Ev = { a: number; b: number; label: string; notes: Note[]; sel?: boolean; extra?: React.ReactNode };
const diamonds: number[] = [];
for (let x = 3; x < 98; x += 6) diamonds.push(x);
for (let x = 113; x < 232; x += 6) diamonds.push(x);

const lanes: Ev[][] = [
  [
    { a: 1.04, b: 10, label: "HALion Sonic 01", notes: nA, extra: <polyline fill="none" stroke="currentColor" points="91,11 100,12 110,14 121,13 131,12 139,14 151,13 161,12 171,15 179,13 193,12 206,10 215,12 227,10 238,11 255,12" /> },
    { a: 10, b: 14, label: "HALion Sonic 01", notes: nB },
    { a: 14, b: 18, label: "HALion Sonic 01", notes: nC },
    { a: 18, b: 19, label: "", notes: nD },
    { a: 20, b: 24, label: "HALion Sonic 01", notes: nE1 },
    { a: 24, b: 28, label: "HALion Sonic 01", notes: nE2 },
  ],
  [
    { a: 6, b: 10, label: "HALion Sonic 01 (D)", notes: nDrum, sel: true },
    { a: 10, b: 19, label: "HALion Sonic 01 (D)", notes: nMel },
  ],
  [],
  [{ a: 6.22, b: 9.8, label: "PK_3_Crash1_", notes: [], sel: true, extra: <><path fill="#989ea5" d="M4 18h98v8L74 31l28 3v6H4z" opacity=".6" /><path fill="#f2f4f6" d="M2 18h2v22H2zM73 32l29-4v8z" /><path fill="#989ea5" d="M84 4l6 4-6 4zM91 4l6 4-6 4z" /></> }],
  [{ a: 10, b: 19, label: "HALion Sonic 02", notes: nMel }],
  [{ a: 10, b: 19, label: "HALion Sonic 02 (D)", notes: nMel }],
  [
    { a: 10, b: 14, label: "ABPL2 01", notes: nBass1 },
    { a: 14, b: 18, label: "ABPL2 01", notes: nBass2 },
    { a: 18, b: 19, label: "ABPL2 01", notes: [] },
    { a: 20, b: 24, label: "ABPL2 01", notes: nF },
    { a: 24, b: 28, label: "ABPL2 01", notes: nF },
  ],
  [{ a: 10, b: 19, label: "HALion Sonic 03", notes: [], extra: <>{diamonds.map((x) => <path key={x} d={`M${x} 16l5 5-5 5-5-5z`} />)}<path d="M101 22l4 5-4 5-4-5z" /></> }],
];

const tracks = [
  { name: "HALion Sonic 01", kind: "keys", bar: true, lvl: 32 },
  { name: "HALion Sonic 01 (D)", kind: "keys" },
  { name: "Audio 01", kind: "wave" },
  { name: "PK_3_Crash1_v2-03", kind: "wave" },
  { name: "HALion Sonic 02", kind: "keys", bar: true },
  { name: "HALion Sonic 02 (D)", kind: "keys" },
  { name: "ABPL2 01", kind: "keys", lvl: 32 },
  { name: "HALion Sonic 03", kind: "keys", bar: true, sel: true, lvl: 10 },
];

const ProjectZone = () => (
  <Project>
    <Tracks>
      <TrackHead>
        <Group $w={50} $h={20}><IconBtn n="plus" z={12} /><IconBtn n="preset" /></Group>
      </TrackHead>
      <TrackList>
        <Row $h={20}>
          <RowTag $pt={3}><Icon n="folder" /></RowTag>
          <FolderName>入力/出力</FolderName>
          <RowMeter />
        </Row>
        {tracks.map((tr, i) => (
          <Row key={tr.name} $sel={tr.sel}>
            <RowTag $bar={tr.bar}><Icon n={tr.kind} z={15} />{i + 1}</RowTag>
            <RowBody>
              <MiniGroup $sel={tr.sel} $mt={2}><Letter $small $w={24}>M</Letter><Letter $small $w={24}>S</Letter></MiniGroup>
              <RowName>{tr.name}</RowName>
              <span />
              <Bar $gap={3}>
                <MiniGroup $sel={tr.sel}>
                  <IconBtn n="rec" z={13} $w={22} $bg={tr.sel ? "#e23c3c" : undefined} />
                  <IconBtn n="speaker" z={11} $w={22} />
                </MiniGroup>
                <MiniGroup $sel={tr.sel}>
                  <IconBtn n="e" z={13} $w={20} />
                  {tr.kind === "keys" && <IconBtn n="keys" z={13} $w={25} />}
                </MiniGroup>
              </Bar>
            </RowBody>
            <RowMeter $lvl={tr.lvl}><i /><i /></RowMeter>
          </Row>
        ))}
      </TrackList>
      <TrackFoot>Simple<Icon n="down" z={10} /><Icon n="gear" z={12} /></TrackFoot>
    </Tracks>
    <Split />
    <Time>
      <TimeTop>
        <Stage>
          <Ruler>
            <FirstBar>1</FirstBar>
            {Array.from({ length: 18 }, (_, i) => 3 + i * 2).map((b) => (
              <Tick key={b} style={{ left: `${barPct(b)}%` }}>{b}</Tick>
            ))}
          </Ruler>
          <Canvas>
            {Array.from({ length: 36 }, (_, i) => i + 2).map((b) => (
              <VLine key={b} $c={b % 2 ? "#66686a" : "#494c4f"} style={{ left: `${barPct(b)}%` }} />
            ))}
            <Lane $h={20} />
            {lanes.map((evs, i) => (
              <Lane key={i}>
                {evs.map((ev) => (
                  <Event key={ev.a} $sel={ev.sel} style={span(ev.a, ev.b)}>
                    <Notes w={(ev.b - ev.a) * 28.53} notes={ev.notes}>{ev.extra}</Notes>
                    {ev.label && <EvLabel $sel={ev.sel}>{ev.label}</EvLabel>}
                    {i === 3 && <GainTag><Icon n="vol" z={8} />-6.14 dB</GainTag>}
                  </Event>
                ))}
              </Lane>
            ))}
          </Canvas>
          <Playhead style={{ left: `${barPct(27.45)}%` }} />
        </Stage>
        <SideCol>
          <TinyBtn $h={22} $edge aria-label="ruler menu"><Icon n="down" z={8} /></TinyBtn>
          <TinyBtn aria-label="edit"><Icon n="pencil" z={8} /></TinyBtn>
          <SmallSlider><Range type="range" $v aria-label="wave zoom" defaultValue={80} /></SmallSlider>
          <Scroll v at={2} size={142} />
          <TinyBtn aria-label="zoom presets"><Icon n="down" z={8} /></TinyBtn>
          <Zoom v len={84} value={3} />
        </SideCol>
      </TimeTop>
      <ScrollRow>
        <Scroll at={4} size={51} />
        <TinyBtn aria-label="zoom presets"><Icon n="down" z={8} /></TinyBtn>
        <Zoom len={83} value={45} />
        <SideCol />
      </ScrollRow>
    </Time>
  </Project>
);

/* ---------- lower zone ---------- */
const Lower = styled.section`
  display: flex;
  flex: 1 1 0;
  min-height: 0;
  flex-direction: column;
  padding: 7px 7px 6px;
  border: 2px solid #56595c;
  border-radius: 8px;
  background: ${c.panel};
`;
const LowerTools = styled.div`
  display: flex;
  justify-content: space-between;
  flex: none;
  margin-bottom: 7px;
`;
const NoSel = styled.p`
  flex: none;
  height: 40px;
  margin: 0;
  background: #17181a;
  text-align: center;
  font-size: 10px;
  line-height: 42px;
`;
const Body = styled.div`
  display: flex;
  flex: 1 1 0;
  min-height: 0;
`;
const DrumPane = styled.div`
  display: flex;
  flex: 0 0 204px;
  min-width: 0;
  flex-direction: column;
`;
const Upper = styled.div`
  flex: 0 0 183px;
  display: flex;
  flex-direction: column;
  overflow: hidden;
  border-bottom: 1px solid #8a8c8e;
`;
const DrumTable = styled.table`
  width: 100%;
  height: 183px;
  table-layout: fixed;
  border-spacing: 0;
  th {
    height: 25px;
    padding: 0 0 0 5px;
    border-left: 1px solid ${c.panel};
    border-right: 1px solid ${c.panel};
    background: #45474a;
    font-weight: 400;
    text-align: left;
    white-space: nowrap;
    overflow: hidden;
  }
  th:last-child { padding-left: 3px; }
  td { height: 30px; padding: 1px 0 0 3px; border-right: 1px solid #717376; font-size: 11px; color: #dfe0e1; }
  td:last-child { border-right: 0; }
  tr:last-child td { height: 38px; vertical-align: top; line-height: 30px; }
`;
const MapRow = styled.div`
  display: flex;
  flex: 1;
  justify-content: space-between;
  align-items: flex-start;
`;
const MapBox = styled.div`
  width: 107px;
  height: 87px;
  padding: 0 4px 0 2px;
  border: solid #717376;
  border-width: 0 1px 1px 0;
  label { display: block; padding-left: 5px; font-size: 11px; line-height: 20px; }
  label + div { margin-bottom: 4px; }
`;
const VelBox = styled.div`
  width: 69px;
  height: 29px;
  padding: 0 3px;
  border: 1px solid #65676a;
  border-top: 0;
  font-size: 9px;
  line-height: 15px;
`;
const GridTop = styled(Canvas)`
  flex: 0 0 158px;
  border-top: 1px solid #5a5c5e;
  border-bottom: 1px solid #8a8c8e;
  background: repeating-linear-gradient(transparent 0 29px, #4f5154 29px 30px) #313236;
`;
const HGrip = styled.i`
  position: absolute;
  left: calc(50% - 6px);
  top: 181px;
  width: 24px;
  height: 3px;
  background: repeating-linear-gradient(90deg, #fff 0 3px, #25282b 3px 5px);
`;
const Tabs = styled.nav`
  display: flex;
  flex: none;
  height: 21px;
  padding-left: 2px;
  font-weight: 600;
  > button { width: 16px; color: #d4d5d6; display: grid; place-items: center; }
`;
const Tab = styled.a<{ $on?: boolean; $w: number; $jp?: boolean }>`
  display: flex;
  align-items: center;
  justify-content: center;
  width: ${(p) => p.$w}px;
  font-size: ${(p) => (p.$jp ? 11 : 12)}px;
  color: #e6e7e8;
  text-decoration: none;
  white-space: nowrap;
  ${(p) => p.$on && css`
    position: relative;
    justify-content: space-between;
    margin-top: -2px;
    padding: 2px 6px 0 19px;
    border: 2px solid #56595c;
    border-top: 0;
    border-radius: 0 0 4px 4px;
    background: ${c.panel};
    color: #fff;
  `}
`;

const BEAT0 = -1.917;
const BEATS = 17.77;
const beatPct = (b: number) => `${((b - BEAT0) / BEATS) * 100}%`;
const beatLines = Array.from({ length: 17 }, (_, i) => i - 1);

const NumInput = styled.input<{ $w: number }>`
  width: ${(p) => p.$w}px;
  min-width: 0;
  flex: 1 1 auto;
  border: 0;
  padding: 0 2px;
  background: ${c.dark};
  text-align: center;
`;

const LowerZone = () => (
  <>
    <Lower>
      <LowerTools>
        <Bar>
          <Group $w={25}><IconBtn n="pin" /></Group>
          <Group $w={50}><IconBtn n="solo" $on /><IconBtn n="one" /></Group>
          <Group $w={25}><IconBtn n="rec" $on z={18} /></Group>
          <Group $w={25}><IconBtn n="loopRec" $dim /></Group>
        </Bar>
        <Bar $ml={8}>
          <Group $w={50}><IconBtn n="home" /><IconBtn n="down" z={11} $dark /></Group>
          <Group $w={50}><IconBtn n="follow" $on /><IconBtn n="down" z={11} $dark /></Group>
          <Group $w={25}><IconBtn n="feedback" /></Group>
          <Group $w={175}>
            {["arrow", "range", "stick", "eraser", "cross", "zoom", "line"].map((n) => <IconBtn key={n} n={n} $on={n === "stick"} z={15} />)}
          </Group>
          <Group $w={100} $dark>
            <IconBtn n="velIn" z={14} $dim />
            <NumInput $w={30} aria-label="velocity" defaultValue="100" />
            <IconBtn n="spin" z={14} $w={20} />
            <Lit aria-label="presets" $w={25}><Icon n="down" z={11} /></Lit>
          </Group>
          <Group $w={113}><Select label="length" icon="len" value="ドラム." /><IconBtn n="diamond" /></Group>
          <Group $w={162}><IconBtn n="snap" $on /><Select label="snap type" value="グリッド" /><Lit $w={25} $dark $fg="#e08a3c" aria-label="nudge"><Icon n="nudge" /></Lit></Group>
          <Group $w={194}><Letter>Q</Letter><Select label="quantize" value="1/8" /><IconBtn n="swing" $w={22} /><IconBtn n="e" z={15} $w={22} /></Group>
          <Group $w={75} $dark><IconBtn n="pads" $on /><IconBtn n="layers" /><IconBtn n="down" z={11} /></Group>
          <Bar $ml={5}>
            <Group $w={125}><Select label="part" value="Groove Agen.01" /></Group>
            <Group $w={132}><Select label="colors" icon="palette" value="ベロシティー" /></Group>
          </Bar>
        </Bar>
        <Group $w={44}><IconBtn n="popout" /><IconBtn n="setup" $dark z={14} $w={19} /></Group>
      </LowerTools>
      <NoSel>選択オブジェクトなし</NoSel>
      <Body>
        <DrumPane>
          <Upper>
            <DrumTable>
              <colgroup><col width="61" /><col width="100" /><col width="43" /></colgroup>
              <thead><tr><th>ピッチ</th><th>ドラムサウンド</th><th>スナップ</th></tr></thead>
              <tbody>
                {["G#-1", "A-1", "A#-1", "B-1", "C0"].map((p, i) => (
                  <tr key={p}><td>{p}</td><td>Beat {i + 1}</td><td>1/16</td></tr>
                ))}
              </tbody>
            </DrumTable>
          </Upper>
          <MapRow>
            <MapBox>
              <label>マップ</label>
              <Group $w={100} $h={19} $dark><Select label="マップ" value="Pop Kit 3 - Gro." size={10} /></Group>
              <label>名前</label>
              <Group $w={100} $h={19} $dark><Select label="名前" value="GM Map" size={11} disabled /></Group>
            </MapBox>
            <VelBox>ベロシティー</VelBox>
          </MapRow>
          <ScrollRow>
            <Scroll at={2} size={36} />
            <Group $w={68} $h={12}><IconBtn n="plus" z={9} $w={34} /><IconBtn n="down" z={9} $w={34} /></Group>
          </ScrollRow>
        </DrumPane>
        <Split $h={183} />
        <Time>
          <TimeTop>
            <Stage>
              <Ruler>
                {Array.from({ length: 71 }, (_, i) => (i - 7) / 4).map((b) => (
                  <Tick key={b} $h={b % 4 === 0 ? 24 : 9} $c={b % 4 === 0 ? "#f2f3f4" : b % 1 === 0 ? "#a9abac" : "#56585b"} style={{ left: beatPct(b) }}>
                    {b % 4 === 0 ? 26 + b / 4 : ""}
                  </Tick>
                ))}
              </Ruler>
              <GridTop>
                {beatLines.map((b) => <VLine key={b} $c={b % 4 ? "#55575a" : "#7a7c7e"} style={{ left: beatPct(b) }} />)}
              </GridTop>
              <Canvas $bg="#313236">
                {beatLines.map((b) => <VLine key={b} $c={b % 4 ? "#55575a" : "#7a7c7e"} style={{ left: beatPct(b) }} />)}
              </Canvas>
              <HGrip />
              <Playhead style={{ left: beatPct(5.67) }} />
            </Stage>
            <SideCol>
              <TinyBtn $h={22} $edge aria-label="ruler menu"><Icon n="down" z={8} /></TinyBtn>
              <Scroll v len={75} at={2} size={28} />
              <Zoom v len={77} value={82} />
              <Scroll v at={0} size={0} />
            </SideCol>
          </TimeTop>
          <ScrollRow>
            <Scroll at={53} size={28} />
            <Zoom len={84} value={64} />
            <SideCol />
          </ScrollRow>
        </Time>
      </Body>
    </Lower>
    <Tabs>
      <button type="button" aria-label="close lower zone"><Icon n="cross" z={12} /></button>
      <Tab href="#mix" $w={108}>MixConsole</Tab>
      <Tab href="#editor" $on $jp $w={107}>エディター<Icon n="down" z={10} /></Tab>
      <Tab href="#sampler" $jp $w={136}>サンプラーコントロール</Tab>
      <Tab href="#chord" $jp $w={96}>コードパッド</Tab>
      <Tab href="#remote" $w={112}>MIDI Remote</Tab>
    </Tabs>
  </>
);

/* ---------- media rack ---------- */
const Right = styled.aside`
  display: flex;
  flex: 0 0 229px;
  min-width: 0;
  flex-direction: column;
`;
const RackTabs = styled.div`
  display: flex;
  flex: none;
  height: 24px;
  padding-left: 1px;
  button {
    width: 68px;
    font-weight: 600;
    color: #dfe0e1;
  }
  button + button {
    position: relative;
    width: 83px;
    border: 2px solid #56595c;
    border-bottom: 0;
    border-radius: 3px 3px 0 0;
    background: ${c.panel};
    color: #fff;
  }
`;
const Rack = styled.div`
  display: flex;
  flex: 1 1 0;
  min-height: 0;
  flex-direction: column;
  margin-top: -2px;
  padding: 7px 6px 7px 7px;
  border: 2px solid #56595c;
  border-radius: 8px;
  background: ${c.panel};
`;
const Search = styled.label`
  display: flex;
  flex: 1;
  align-items: center;
  gap: 6px;
  height: 20px;
  padding-left: 3px;
  border: 1px solid ${c.line};
  border-radius: 2px;
  background: ${c.dark};
  input { flex: 1; min-width: 0; border: 0; background: none; font-style: italic; font-size: 11px; outline: 0; }
  input::placeholder { color: #a0a2a4; }
`;
const Crumbs = styled.div`
  display: flex;
  align-items: center;
  flex: none;
  height: 30px;
  margin-top: 2px;
  border-bottom: 1px solid #8a8c8e;
  gap: 3px;
  color: #f0f1f2;
  a { color: inherit; text-decoration: none; white-space: nowrap; }
  svg + a { margin-left: 3px; }
  a + svg { margin-left: 3px; }
`;
const Filters = styled.div`
  display: grid;
  flex: none;
  grid-template-columns: 64px 64px 66px;
  grid-template-rows: 19px 85px;
  gap: 3px 6px;
  margin: 8px 2px 7px;
`;
const TagList = styled.div`
  position: relative;
  overflow: hidden;
  &::before, &::after {
    content: "";
    position: absolute;
    top: 0;
    right: 1px;
    width: 6px;
    height: 85px;
    border-radius: 3px;
    background: #55575a;
  }
  &::after { height: 30px; background: #f4f5f6; }
  ul { width: calc(100% - 9px); height: 85px; overflow: hidden; }
  li { padding-left: 2px; font-size: 11px; font-weight: 600; line-height: 19px; color: #f2f3f4; white-space: nowrap; }
`;
const NameHead = styled.div`
  display: flex;
  align-items: center;
  flex: none;
  gap: 6px;
  height: 16px;
  padding-left: 3px;
  background: #45474a;
  font-size: 11px;
  color: #e4e5e6;
`;
const FileArea = styled.div`
  display: flex;
  flex: 1 1 0;
  min-height: 0;
  margin-top: 2px;
`;
const Files = styled.ul`
  flex: 1;
  overflow: hidden;
`;
const File = styled.li<{ $sel?: boolean }>`
  display: flex;
  align-items: center;
  gap: 9px;
  height: 19px;
  padding-left: 1px;
  border-bottom: 1px solid #43464a;
  font-size: 11px;
  font-weight: 600;
  color: ${(p) => (p.$sel ? "#08090a" : "#f2f3f4")};
  background: ${(p) => (p.$sel ? "#bfc0c2" : "transparent")};
`;
const Rail = styled.div<{ $v?: boolean; $at: number; $len: number }>`
  flex: none;
  ${(p) => p.$v ? css`width: 6px; margin: 0 1px;` : css`height: 6px; margin: 2px 9px 5px 1px;`}
  border-radius: 3px;
  background: linear-gradient(#f4f5f6, #f4f5f6) no-repeat #55575a;
  background-size: ${(p) => (p.$v ? `6px ${p.$len}px` : `${p.$len}px 6px`)};
  background-position: ${(p) => (p.$v ? `0 ${p.$at}px` : `${p.$at}px 0`)};
`;
const Preview = styled.div`
  flex: none;
  height: 75px;
  margin-bottom: 10px;
  padding: 5px;
  border-radius: 4px;
  background: #17191b;
  font-size: 10px;
  div { display: grid; grid-template-columns: 93px 1fr auto; padding-left: 5px; margin-top: -14px; line-height: 14px; }
  p { margin: 2px 4px 0; text-align: right; font-size: 11px; line-height: 15px; }
`;
const PlayRow = styled.div`
  display: flex;
  flex: none;
  justify-content: space-between;
  padding: 0 5px;
  margin-bottom: 12px;
  &:last-child { margin-bottom: 5px; }
`;
const Volume = styled.input`
  appearance: none;
  align-self: center;
  flex: 1;
  min-width: 0;
  height: 5px;
  margin: 0 5px 0 4px;
  background: linear-gradient(90deg, #5aa9e6 70%, #45474a 70%);
  &::-webkit-slider-thumb { appearance: none; width: 9px; height: 9px; border-radius: 50%; background: #dcddde; }
`;

const files = ["3_HHO_v3", "3_HHO_v2", "3_HHO_v1", "3_HHF_v2", "3_HHF_v1", "3_HHC_v3", "3_HHC_v2", "3_HHC_v1", "3_CrossStick_v2", "3_CrossStick_v1", "3_Crash3_v2", "3_Crash3_v1", "3_Crash2_v2", "3_Crash2_v1", "3_Crash1_v2", "3_Crash1_v1", "2_Tom3_v3", "2_Tom3_v2", "2_Tom3_v1", "2_Tom2_v3", "2_Tom2_v2", "2_Tom2_v1", "2_Tom1_v3", "2_Tom1_v2"];
const tagCols: [string, string[]][] = [
  ["Sub Cat.", ["Beats", "Beeps&Blips", "Cymbals", "HiHats", "Hits&Stabs"]],
  ["Sub Sty.", ["80's Pop", "Alternative", "Britpop", "Classic Rock", "Dark Ambient"]],
  ["Charact.", ["Acoustic", "Analog", "Clean", "Dark", "Digital"]],
];

const MediaRack = () => (
  <Right>
    <RackTabs><button type="button">VSTi</button><button type="button">メディア</button></RackTabs>
    <Rack>
      <Bar $gap={3}>
        <Search><Icon n="search" z={13} /><input placeholder="検索" aria-label="検索" /></Search>
        <Group $w={25} $h={20}><IconBtn n="list" z={15} $dim /></Group>
      </Bar>
      <Crumbs>
        <Group $w={20} $h={20}><IconBtn n="back" z={13} /></Group>
        <Icon n="house" /><Icon n="right" z={9} />
        <a href="#up">...</a><Icon n="right" z={9} />
        <a href="#drums">AM SignatureDrums</a>
      </Crumbs>
      <Bar $gap={3} $mt={2}>
        <Group $w={100} $h={20}><Select label="media types" value="すべてのメディアタ." size={10} /></Group>
        <Group $w={25} $h={20}><IconBtn n="rewind" z={13} /></Group>
        <Group $w={25} $h={20}><IconBtn n="shuffle" z={13} /></Group>
        <Group $w={25} $h={20} $dark><IconBtn n="gear" z={12} /></Group>
        <Group $w={25} $h={20}><IconBtn n="layT" z={15} $on /></Group>
      </Bar>
      <Filters>
        {tagCols.map(([h]) => <Group key={h} $h={19} $dark><Select label={h} value={h} size={10} /></Group>)}
        {tagCols.map(([h, items]) => (
          <TagList key={h}><ul>{items.map((x) => <li key={x}>{x}</li>)}</ul></TagList>
        ))}
      </Filters>
      <NameHead><Icon n="sort" z={10} />Name</NameHead>
      <FileArea>
        <Files>
          {files.map((f) => (
            <File key={f} $sel={f === "3_Crash1_v2"}><Icon n="wave" />{"PK_" + f}</File>
          ))}
        </Files>
        <Rail $v $at={261} $len={30} />
      </FileArea>
      <Rail $at={0} $len={78} />
      <Preview>
        <svg width="100%" height="45" viewBox="0 0 202 45">
          <path stroke="#515356" d="M20 0v15M38 0v15M57 0v15M76 0v15M113 0v15M131 0v15M150 0v15M169 0v15" />
          <path stroke="#a9abac" d="M94 0v15M187 0v43" />
          <path stroke="#f2f3f4" d="M1 9h200M1 25h200M.5 0v45" />
          <path fill="#f2f3f4" d="M0 0h9L0 9zM1 8h18v2H1zM1 24h18v2H1z" />
        </svg>
        <div><span>0</span><span>5</span><span>10</span></div>
        <p>PK_3_Crash1_v2</p>
      </Preview>
      <PlayRow>
        <Group $w={75} $h={19}><IconBtn n="play" z={12} /><IconBtn n="stop" z={12} $on /><IconBtn n="cycle" z={13} /></Group>
        <Group $w={71} $h={19} $dark><IconBtn n="vol" z={13} $w={18} /><Volume type="range" aria-label="volume" defaultValue={74} /></Group>
        <Group $w={50} $h={19}><IconBtn n="auto" z={12} $on /><IconBtn n="beats" z={12} /></Group>
      </PlayRow>
      <PlayRow>
        <Group $w={63} $h={19} $dark><Btn $w={25}>-</Btn><Btn $w={20} $dim>-</Btn><IconBtn n="down" z={9} $w={18} $dim /></Group>
        <Group $w={100} $h={19}><IconBtn n="note" z={12} $dim /><Btn $dim>1/2</Btn><Btn $dim>2x</Btn><IconBtn n="tape" z={12} /></Group>
      </PlayRow>
    </Rack>
  </Right>
);

/* ---------- transport ---------- */
const Transport = styled.footer`
  display: flex;
  justify-content: space-between;
  align-items: center;
  flex: none;
  height: 40px;
  padding: 0 4px;
  background: ${c.panel};
`;
const BigGroup = styled.div`
  display: flex;
  width: 277px;
  height: 32px;
  border: 2px solid #c6c7c8;
  border-radius: 3px;
  background: #6b6d6f;
`;
const TimeBox = styled.output`
  display: flex;
  align-items: center;
  justify-content: flex-end;
  flex: 1 1 0;
  padding-right: 5px;
  background: ${c.dark};
  font: 13px "Liberation Sans", sans-serif;
  white-space: pre;
  color: #d4d5d6;
`;
const OutMeter = styled.div`
  display: flex;
  align-items: flex-end;
  width: 89px;
  height: 25px;
  padding: 1px 2px 1px 25px;
  border: 1px solid ${c.line};
  border-radius: 3px;
  background: linear-gradient(90deg, transparent 25px, #45474a 25px 26px, transparent 26px) ${c.dark};
  gap: 1px;
`;
const Lvl = styled.i<{ $c: string; $w: number; $h: number; $ml?: number }>`
  width: ${(p) => p.$w}px;
  height: ${(p) => p.$h}px;
  margin-left: ${(p) => p.$ml ?? 0}px;
  background: ${(p) => p.$c};
`;

const TransportBar = () => (
  <Transport>
    <Bar $gap={6}>
      <Group $w={25}><IconBtn n="clock" /></Group>
      <Group $w={44} $dark><IconBtn n="rec" /><IconBtn n="down" z={10} $w={20} /></Group><Dots />
      <Group $w={44} $dark><IconBtn n="wave" /><IconBtn n="down" z={10} $w={20} /></Group><Dots />
      <Group $w={213}><Select label="record mode" icon="palPart" value="新規パート" /><Select label="mix mode" value="ミックス" /></Group><Dots />
      <Group $w={38}><TextBtn $w={38}>AQ</TextBtn></Group>
    </Bar>
    <Bar $gap={6}>
      <Group $w={150}><IconBtn n="locL" z={14} /><TimeBox>{"1.  1.  1.   0"}</TimeBox></Group>
      <Bar $ml={4}><Group $w={149}><IconBtn n="locR" z={14} /><TimeBox>{"1.  1.  1.   0"}</TimeBox></Group></Bar>
      <Group $w={50}><IconBtn n="punchIn" z={13} /><IconBtn n="punchOut" z={13} /></Group>
      <BigGroup>
        <IconBtn n="toStart" $w={37} $fg="#f0f1f2" /><IconBtn n="toEnd" $w={38} $fg="#f0f1f2" /><IconBtn n="cycle" $w={50} $fg="#f0f1f2" />
        <IconBtn n="stopO" $w={49} $fg="#f0f1f2" /><IconBtn n="playO" $w={50} $bg="#3bd63b" $fg="#10330f" /><IconBtn n="recO" $w={49} $fg="#f0f1f2" />
      </BigGroup><Dots />
      <Group $w={37}><IconBtn n="preroll" $w={37} /></Group>
      <Group $w={147} $dark><IconBtn n="note" /><TimeBox>{"27.  2.  3.  84"}</TimeBox></Group><Dots />
      <Group $w={232} $dark>
        <IconBtn n="tempo" $on />
        <NumInput $w={60} aria-label="tempo" defaultValue="242.000" />
        <IconBtn n="spin" z={14} $w={18} />
        <Lit $w={53}>4/4</Lit>
        <Lit $w={48} $bg={c.raised}>Tap</Lit>
        <IconBtn n="down" z={11} />
      </Group><Dots />
    </Bar>
    <Bar $gap={6} $ml={4}>
      <Group $w={44}><IconBtn n="metro" /><Lit $w={20} aria-label="metronome setup"><Icon n="gear" z={12} /></Lit></Group><Dots />
      <OutMeter>
        <Lvl $c="#e8121a" $w={4} $h={21} $ml={4} />
        <Lvl $c="#2fd0d8" $w={7} $h={1} $ml={12} />
        <Lvl $c="linear-gradient(#35e0a0, #22d4ee)" $w={7} $h={17} $ml={5} />
        <Lvl $c="linear-gradient(#35e0a0, #22d4ee)" $w={7} $h={17} />
        <Lvl $c="#e8121a" $w={4} $h={21} $ml={4} />
      </OutMeter><Dots />
    </Bar>
  </Transport>
);

const ChannelStrip = () => (
  <Strip>
    <StripTitle>チャンネル</StripTitle>
    <StripHead><span>H.03</span><IconBtn n="out" z={12} $w={19} $dark /></StripHead>
    <Eq />
    <StripHead $mt={18}><span>Inser.</span><IconBtn n="insert" z={12} $w={19} /></StripHead>
    <Slot $h={17} />
    <StripHead $mt={22}><span>Sends</span><IconBtn n="send" z={12} $w={19} /></StripHead>
    <Slot $h={35} />
    <Grip />
    <Quad><Letter $small $bg={c.key}>M</Letter><Letter $small $bg={c.key}>S</Letter><Btn $bg={c.key} aria-label="listen" /><IconBtn n="e" z={13} $bg={c.key} /></Quad>
    <Pan>C</Pan>
    <Levels>
      <Well><Fader type="range" aria-label="level" min={0} max={100} defaultValue={4} /></Well>
      <Well><Scale>{[0, 6, 12, 18, 24, 30].map((n) => <li key={n}>- {n} -</li>)}</Scale><Meters><i /><i /></Meters></Well>
    </Levels>
    <Readout><span>3.20</span><span>2.0</span></Readout>
    <Quad><Letter $small $bg={c.key}>R</Letter><Letter $small $bg={c.key}>W</Letter><IconBtn n="rec" z={14} $fg="#3a0d0d" $bg="#e23c3c" /><IconBtn n="speaker" z={12} $bg={c.key} /></Quad>
    <Num><Icon n="keys" z={14} />8</Num>
    <NameBox>HALion<br />Sonic 03</NameBox>
  </Strip>
);

const fields: [string, string, number, boolean?][] = [
  ["名前", "Groove Agent SE 01", 167], ["開始", "9.  1.  1.    0", 98, true], ["終了", "10.  1.  1.    0", 98, true],
  ["長さ", "1.  0.  0.    0", 98, true], ["オフセット", "3.  0.  0.    0", 98, true], ["ミュート", "-", 98], ["移調", "0", 100], ["ベロシティー", "69", 98],
];
const chips: [string, string, number][] = [
  ["オーディオ入力", "接続されました", 160], ["オーディオ出力", "接続されました", 160], ["Control Room", "接続されました", 167],
  ["残り録音時間", "84 時間 05 分", 171], ["録音形式", "48 kHz - 16 bit", 157], ["フレームレート", "30 fps", 125], ["プロジェクトのパン補正", "均等パワー", 176],
];
const menu = ["ファイル", "編集", "プロジェクト", "Audio", "MIDI", "スコア", "メディア", "トランスポート", "スタジオ", "ウィンドウ", "VST Cloud", "Hub", "マニュアル"];
const tools = ["arrow", "range", "pencil", "eraser", "scissors", "glue", "cross", "zoom", "line", "speaker", "bucket"];
const isJp = (x: string) => !/[A-Za-z0-9]/.test(x);

export default function App() {
  return (
    <Shell>
      <Global />
      <Top>
        <TitleBar>
          <svg width="16" height="16" viewBox="0 0 16 16"><rect width="16" height="16" fill="#1c6ba8" /><path d="M9 2L3 8l6 6V11L6 8l3-3zM10 6h2v4h-2z" fill="#fff" /></svg>
          <span>Cubase Elements プロジェクト - sinse</span>
          <WinBtns>
            <button aria-label="minimize"><Icon n="min" z={13} /></button>
            <button aria-label="restore"><Icon n="restore" z={13} /></button>
            <button aria-label="close"><Icon n="close" z={13} /></button>
          </WinBtns>
        </TitleBar>
        <Menu>
          {menu.map((m) => <MenuItem key={m} href={"#" + m} $jp={isJp(m)}>{m}</MenuItem>)}
        </Menu>
        <ToolRow>
          <Group $w={50}><IconBtn n="undo" z={14} /><IconBtn n="redo" z={14} /></Group>
          <Bar $ml={10}>
            <Group $w={100}>{["M", "S", "R", "W"].map((l) => <Letter key={l}>{l}</Letter>)}</Group>
            <Group $w={50}><IconBtn n="follow" $on /><IconBtn n="down" z={11} $dark /></Group>
            <Group $w={275}>{tools.map((n) => <IconBtn key={n} n={n} z={15} $on={n === "arrow"} />)}</Group>
            <Group $w={44} $dark><IconBtn n="palette" /><IconBtn n="down" z={11} $w={20} /></Group>
            <Group $w={25}><IconBtn n="fade" /></Group>
            <Bar $ml={5}>
              <Group $w={138}><IconBtn n="snap" $on /><Select label="snap type" value="グリッド" /></Group>
              <Group $w={137}><Select label="grid type" icon="hash" value="ズームに適応" /></Group>
            </Bar>
            <Group $w={195}><Letter>Q</Letter><Select label="quantize" value="1/8" /><IconBtn n="swing" $w={22} /><IconBtn n="e" z={15} $w={22} /></Group>
          </Bar>
          <Bar>
            <Group $w={25}><IconBtn n="keyWin" /></Group>
            <Group $w={119}><IconBtn n="layL" $on /><IconBtn n="layBoxL" /><IconBtn n="layB" $on /><IconBtn n="layR" $on /><IconBtn n="setup" $dark z={14} $w={19} /></Group>
          </Bar>
        </ToolRow>
        <Status>
          {chips.map(([l, v, w]) => <Chip key={l} $w={w} $jp={isJp(v)}><span>{l}</span><b>{v}</b></Chip>)}
        </Status>
        <InfoLine>
          {fields.map(([l, v, w, r]) => <Field key={l} $w={w} $right={r}><dt>{l}</dt><dd>{v}</dd></Field>)}
        </InfoLine>
        <Overview>
          <svg width="118" height="28" viewBox="0 0 118 28">
            <rect x="1" width="117" height="28" fill="#55575a" />
            <path fill="#b0b1b2" d="M1 0h57v6H16V3H1zM61 0h25v3H61zM17 9h11v3H17zM29 12h29v12H29zM61 18h25v3H61zM26 24h60v3H26z" />
          </svg>
        </Overview>
      </Top>
      <Main>
        <ChannelStrip />
        <Center>
          <ProjectZone />
          <LowerZone />
        </Center>
        <MediaRack />
      </Main>
      <TransportBar />
    </Shell>
  );
}
